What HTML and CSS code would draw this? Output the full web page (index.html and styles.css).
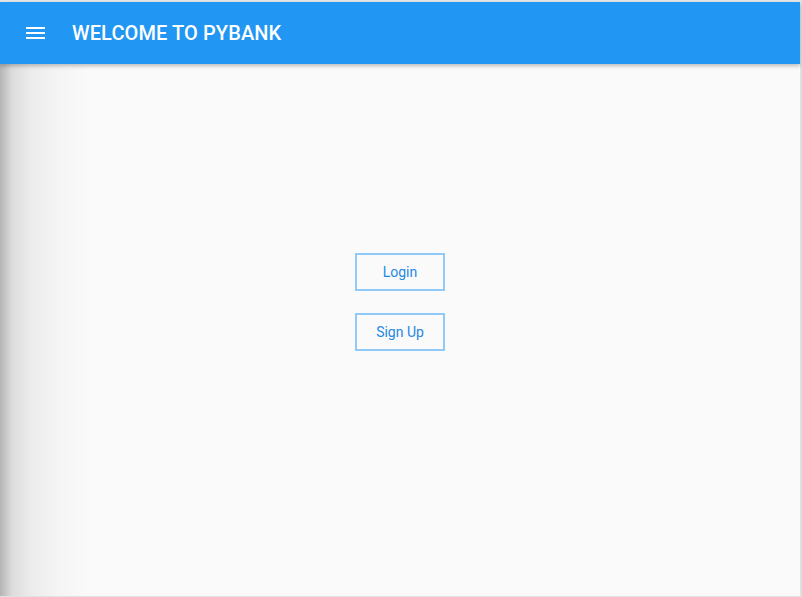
FILE: index.html
```html
<!DOCTYPE html>
<html>
<head>
<meta charset="utf-8">
<link rel="stylesheet" href="styles.css">
</head>
<body>
<div class="frame">
  <header class="appbar">
    <button class="menu" aria-label="menu">
      <svg width="19" height="12" viewBox="0 0 19 12"><rect x="0" y="0" width="19" height="2" fill="#fff"/><rect x="0" y="5" width="19" height="2" fill="#fff"/><rect x="0" y="10" width="19" height="2" fill="#fff"/></svg>
    </button>
    <h1 class="title">WELCOME TO PYBANK</h1>
  </header>
  <main class="content">
    <div class="actions">
      <button class="btn">Login</button>
      <button class="btn">Sign Up</button>
    </div>
  </main>
</div>
</body>
</html>
```
FILE: styles.css
```css
html, body { margin: 0; padding: 0; height: 100%; }
body { background: #fafafa; font-family: Roboto, "Noto Sans", sans-serif; overflow: hidden; }
.frame {
  height: 597px;
  box-sizing: border-box;
  border-top: 2px solid #e6e6e6;
  border-right: 2px solid #e0e0e0;
  border-bottom: 1px solid #e0e0e0;
  display: flex;
  flex-direction: column;
  position: relative;
}
.appbar {
  height: 62px;
  background: #2196f3;
  display: flex;
  align-items: center;
  padding-left: 26px;
  box-shadow: 0 2px 4px rgba(0,0,0,0.25);
  position: relative;
  z-index: 2;
  flex-shrink: 0;
}
.menu {
  background: none; border: 0; padding: 0; margin: 0;
  width: 19px; height: 12px; display: flex;
}
.title {
  margin: 0 0 0 27px;
  color: #fff;
  font-size: 20px;
  font-weight: 500;
  letter-spacing: 0.1px;
}
.content {
  flex: 1;
  background: linear-gradient(to right, rgba(0,0,0,0.28) 0px, rgba(0,0,0,0.12) 12px, rgba(0,0,0,0.06) 30px, rgba(0,0,0,0.02) 60px, rgba(0,0,0,0) 92px), #fafafa;
  display: flex;
  justify-content: center;
  padding-top: 189px;
}
.actions {
  display: flex;
  flex-direction: column;
  align-items: center;
  gap: 22px;
}
.btn {
  width: 90px;
  height: 38px;
  box-sizing: border-box;
  border: 2px solid #90caf9;
  background: transparent;
  color: #1e88e5;
  font-family: Roboto, sans-serif;
  font-size: 14px;
  padding: 0;
  border-radius: 0;
}
```
